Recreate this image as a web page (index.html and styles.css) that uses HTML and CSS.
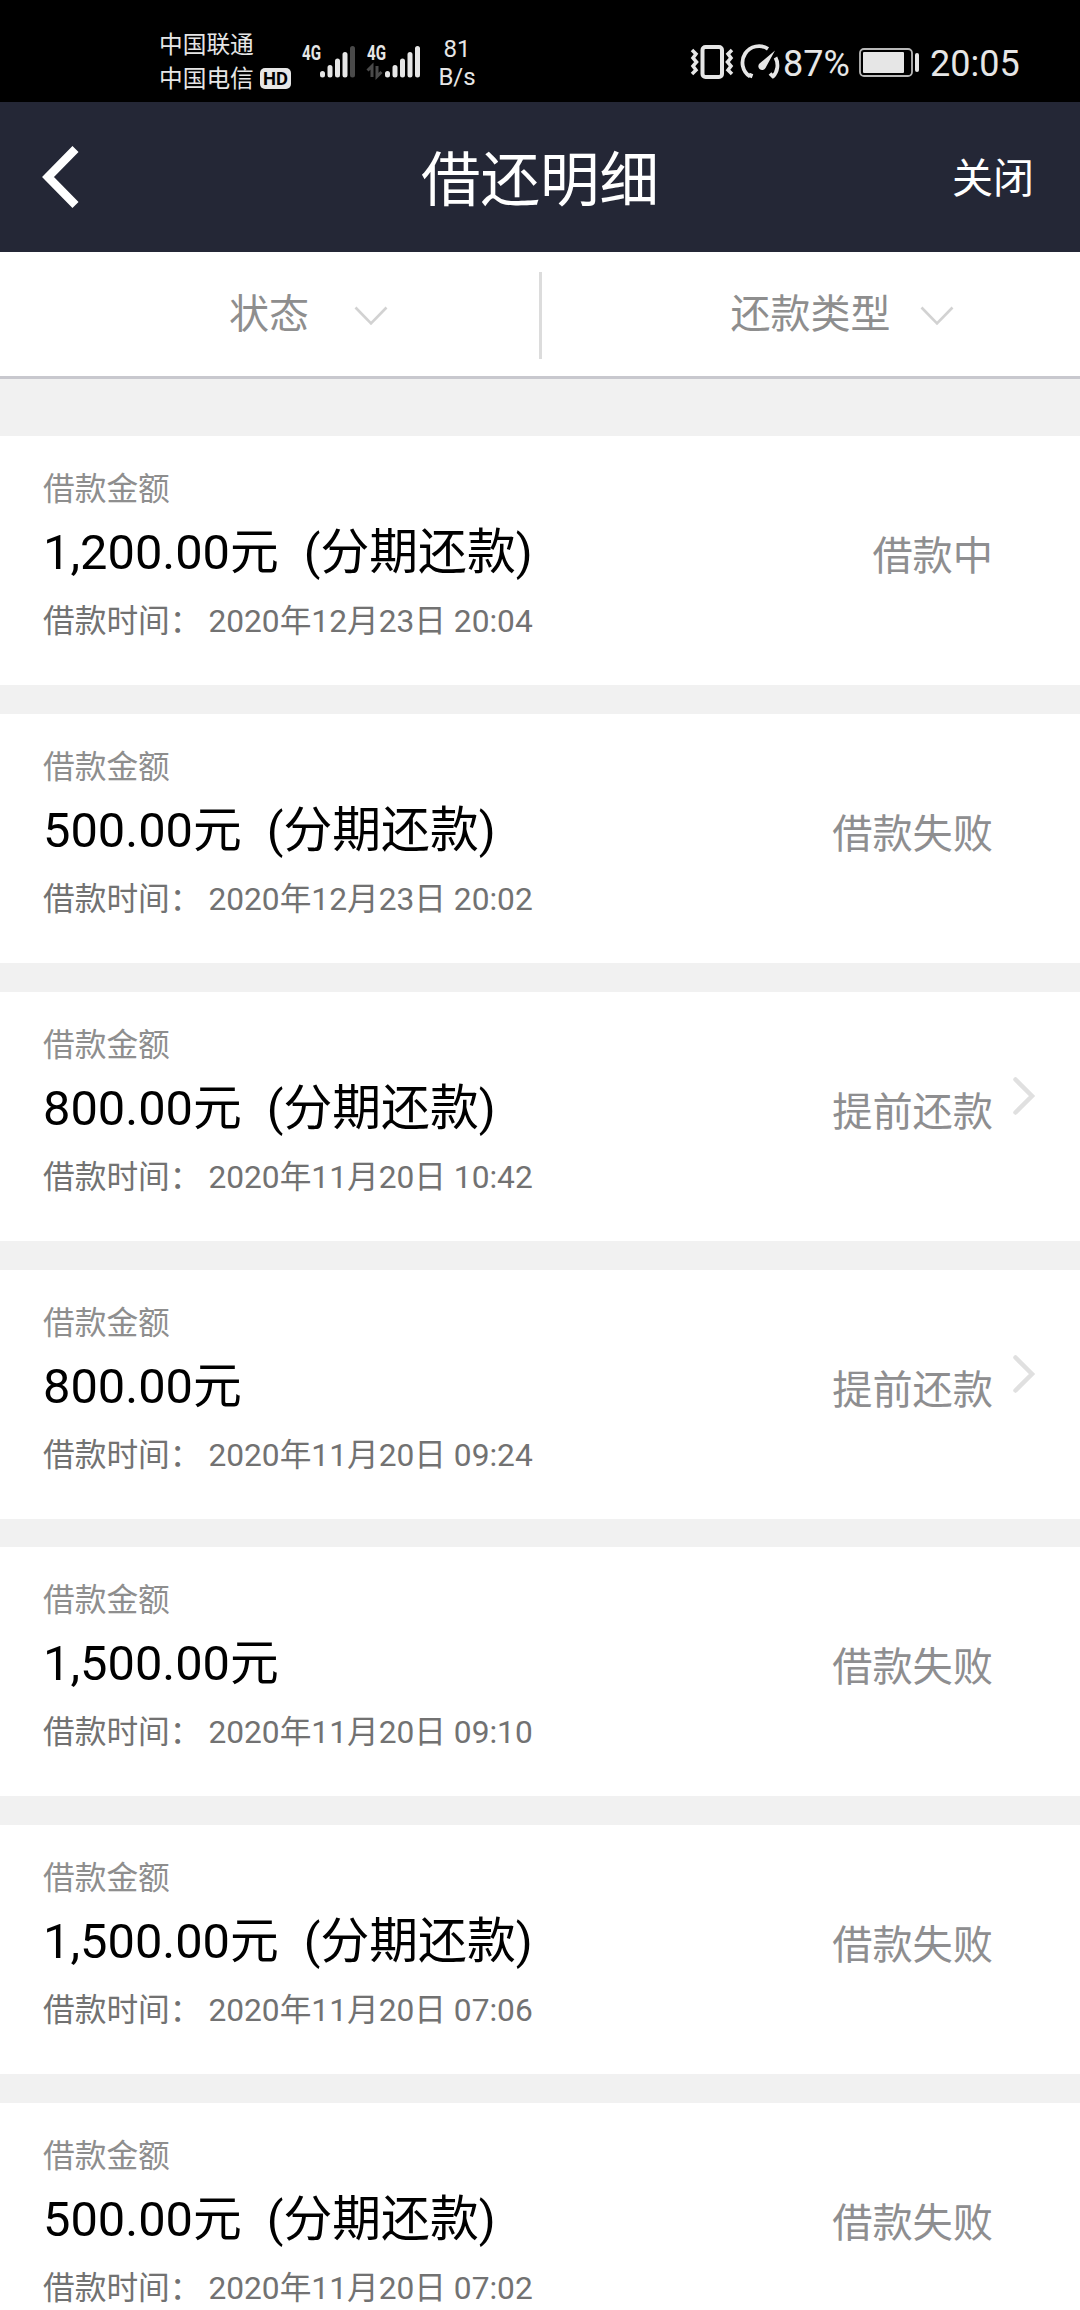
FILE: index.html
```html
<!DOCTYPE html>
<html lang="zh-CN">
<head>
  <meta charset="UTF-8">
  <meta name="viewport" content="width=device-width, initial-scale=1.0">
  <title>借还明细</title>
  <link rel="stylesheet" href="styles.css">
</head>
<body>

  <!-- Status bar -->
  <div class="status-bar">
    <div class="carriers">
      <div>中国联通</div>
      <div class="carrier-row">中国电信<span class="hd"><svg width="31" height="21" viewBox="0 0 31 21"><rect width="31" height="21" rx="5" fill="#e6e6e6"/><text x="3" y="17" textLength="25" lengthAdjust="spacingAndGlyphs" class="hd-text">HD</text></svg></span></div>
    </div>
    <svg class="signal" width="54" height="44" viewBox="0 -8 54 44">
      <text x="0" y="16" textLength="19" lengthAdjust="spacingAndGlyphs" class="net-text">4G</text>
      <g stroke="#e6e6e6" stroke-width="5" stroke-linecap="round">
        <path d="M20.500 31v-1.500M28 31v-7.500M35.500 31V17M43 31V10.500"/>
        <path d="M50.500 31V4.500" stroke="#4a4a4a"/>
      </g>
    </svg>
    <svg class="signal second" width="54" height="44" viewBox="0 -8 54 44">
      <text x="0" y="16" textLength="19" lengthAdjust="spacingAndGlyphs" class="net-text">4G</text>
      <path d="M0.500 26.500L5 22V33M10 22V32.500L14.500 28" fill="none" stroke="#4a4a4a" stroke-width="3"/>
      <g stroke="#e6e6e6" stroke-width="5" stroke-linecap="round">
        <path d="M20.500 31v-1.500M28 31v-7.500M35.500 31V17M43 31V10.500M50.500 31V4.500"/>
      </g>
    </svg>
    <div class="speed">
      <div>81</div>
      <div>B/s</div>
    </div>
    <svg class="vibrate" width="42" height="34" viewBox="0 0 42 34" fill="none" stroke="#e6e6e6">
      <rect x="11.500" y="2" width="19.500" height="30" rx="3" stroke-width="4"/>
      <path d="M1 5l4 4-3 4 3.500 4-3.500 4 3 4-4 4M41 5l-4 4 3 4-3.500 4 3.500 4-3 4 4 4" stroke-width="3.500"/>
    </svg>
    <svg class="gauge" width="38" height="34" viewBox="0 0 38 34">
      <path d="M8 32.500L9.500 28.500M8 31.500A16.500 16.500 0 0 1 26 3.800M33.500 12.500A16.500 16.500 0 0 1 31 31.500L28 28.500" fill="none" stroke="#e6e6e6" stroke-width="3.800" stroke-linejoin="round"/>
      <path d="M33 5.500L23.500 23a3.800 3.800 0 1 1-6-4.500z" fill="#e6e6e6"/>
    </svg>
    <div class="percent">87%</div>
    <svg class="battery" width="60" height="29" viewBox="0 0 60 29">
      <rect x="1" y="1" width="52" height="27" rx="4" fill="none" stroke="#b8b8b8" stroke-width="1.800"/>
      <rect x="4" y="4" width="41" height="21" rx="1" fill="#e6e6e6"/>
      <rect x="56" y="5" width="4" height="19" rx="2" fill="#e6e6e6"/>
    </svg>
    <div class="clock">20:05</div>
  </div>

  <!-- Header -->
  <header class="header">
    <svg class="back" width="38" height="64" viewBox="0 0 38 64">
      <path d="M33.500 4L6 32l27.500 28" fill="none" stroke="#fff" stroke-width="8.500"/>
    </svg>
    <h1>借还明细</h1>
    <div class="close">关闭</div>
  </header>

  <!-- Filters -->
  <div class="filters">
    <div class="filter">
      <span>状态</span>
      <svg width="34" height="20" viewBox="0 0 34 20"><path d="M1.500 1.500L17 17.500l15.500-16" fill="none" stroke="#d2d2d2" stroke-width="2.600"/></svg>
    </div>
    <div class="divider"></div>
    <div class="filter type">
      <span>还款类型</span>
      <svg width="34" height="20" viewBox="0 0 34 20"><path d="M1.500 1.500L17 17.500l15.500-16" fill="none" stroke="#d2d2d2" stroke-width="2.600"/></svg>
    </div>
  </div>

  <!-- Loan list -->
  <div class="list">
    <div class="card">
      <div class="info">
        <div class="label">借款金额</div>
        <div class="amount">1,200.00元<span class="plan">(分期还款)</span></div>
        <div class="time">借款时间：<span>2020年12月23日 20:04</span></div>
      </div>
      <div class="state">借款中</div>
    </div>
    <div class="card">
      <div class="info">
        <div class="label">借款金额</div>
        <div class="amount">500.00元<span class="plan">(分期还款)</span></div>
        <div class="time">借款时间：<span>2020年12月23日 20:02</span></div>
      </div>
      <div class="state">借款失败</div>
    </div>
    <div class="card">
      <div class="info">
        <div class="label">借款金额</div>
        <div class="amount">800.00元<span class="plan">(分期还款)</span></div>
        <div class="time">借款时间：<span>2020年11月20日 10:42</span></div>
      </div>
      <div class="state">提前还款</div>
      <svg class="arrow" width="24" height="40" viewBox="0 0 24 40"><path d="M3.500 3.500L20 20 3.500 36.500" fill="none" stroke="#e0e0e0" stroke-width="4.500" stroke-linecap="round"/></svg>
    </div>
    <div class="card">
      <div class="info">
        <div class="label">借款金额</div>
        <div class="amount">800.00元</div>
        <div class="time">借款时间：<span>2020年11月20日 09:24</span></div>
      </div>
      <div class="state">提前还款</div>
      <svg class="arrow" width="24" height="40" viewBox="0 0 24 40"><path d="M3.500 3.500L20 20 3.500 36.500" fill="none" stroke="#e0e0e0" stroke-width="4.500" stroke-linecap="round"/></svg>
    </div>
    <div class="card">
      <div class="info">
        <div class="label">借款金额</div>
        <div class="amount">1,500.00元</div>
        <div class="time">借款时间：<span>2020年11月20日 09:10</span></div>
      </div>
      <div class="state">借款失败</div>
    </div>
    <div class="card">
      <div class="info">
        <div class="label">借款金额</div>
        <div class="amount">1,500.00元<span class="plan">(分期还款)</span></div>
        <div class="time">借款时间：<span>2020年11月20日 07:06</span></div>
      </div>
      <div class="state">借款失败</div>
    </div>
    <div class="card">
      <div class="info">
        <div class="label">借款金额</div>
        <div class="amount">500.00元<span class="plan">(分期还款)</span></div>
        <div class="time">借款时间：<span>2020年11月20日 07:02</span></div>
      </div>
      <div class="state">借款失败</div>
    </div>
  </div>

</body>
</html>
```
FILE: styles.css
```css
* {
  box-sizing: border-box;
}

body {
  margin: 0;
  width: 1080px;
  height: 2310px;
  overflow: hidden;
  background-color: #f1f1f1;
  font-family: Roboto, "Noto Sans CJK SC", sans-serif;
}

svg {
  display: block;
  flex: none;
  overflow: visible;
}

/* Status bar */
.status-bar {
  display: flex;
  height: 102px;
  background-color: #000;
  color: #e6e6e6;
  padding-left: 159px;
  white-space: nowrap;
}

.carriers {
  width: 143px;
  padding-top: 28px;
  font-size: 23.7px;
  line-height: 34px;
}

.carrier-row {
  display: flex;
}

.hd {
  margin: 6px 0 0 6px;
}

.hd-text {
  font-size: 19px;
  font-weight: 700;
  fill: #000;
}

.net-text {
  font-size: 21px;
  font-weight: 700;
  fill: #e6e6e6;
}

.signal {
  margin-top: 36px;
}

.signal.second {
  margin-left: 11px;
}

.speed {
  width: 50px;
  margin-left: 11px;
  padding-top: 35px;
  text-align: center;
  font-size: 24px;
  line-height: 28px;
}

.vibrate {
  margin: 45px 0 0 209px;
}

.gauge {
  margin: 45px 0 0 9px;
}

.percent {
  width: 76px;
  margin-left: 3px;
  padding-top: 43px;
  font-size: 36px;
  line-height: 42px;
}

.battery {
  margin-top: 48px;
}

.clock {
  margin-left: 11px;
  padding-top: 43px;
  font-size: 36px;
  line-height: 42px;
}

/* Header */
.header {
  display: flex;
  align-items: center;
  justify-content: space-between;
  height: 150px;
  padding: 0 46px 0 42px;
  background-color: #242736;
  color: #fff;
}

.header h1 {
  margin: 7px 0 0 48px;
  font-size: 59.5px;
  font-weight: 400;
  line-height: 80px;
}

.close {
  margin-top: 4px;
  font-size: 41px;
  line-height: 60px;
}

/* Filters */
.filters {
  display: flex;
  height: 127px;
  background-color: #fff;
  border-bottom: 3px solid #c8c8ce;
  color: #8e8e8e;
  font-size: 40px;
  line-height: 60px;
}

.filter {
  display: flex;
  align-items: center;
  width: 539px;
  padding-left: 229px;
}

.filter span {
  margin-top: 1px;
}

.filter svg {
  margin: 4px 0 0 45px;
}

.filter.type {
  padding-left: 189px;
}

.filter.type svg {
  margin-left: 29px;
}

.divider {
  width: 3px;
  height: 87px;
  margin-top: 20px;
  background-color: #dcdcdc;
}

/* Loan list */
.list {
  display: flex;
  flex-direction: column;
  gap: 28.85px;
  padding-top: 57px;
}

.card {
  display: flex;
  flex: none;
  height: 249px;
  padding: 31px 44px 0 43px;
  background-color: #fff;
  white-space: nowrap;
}

.info {
  width: 600px;
}

.label {
  font-size: 31.7px;
  line-height: 46px;
  color: #8e8e8e;
}

.amount {
  margin-top: 6px;
  font-size: 48.8px;
  line-height: 68px;
  color: #000;
}

.plan {
  margin-left: 25px;
}

.time {
  margin-top: 12px;
  font-size: 31.7px;
  line-height: 46px;
  color: #727272;
}

.time span {
  margin-left: 7px;
}

.state {
  width: 350px;
  padding-top: 60px;
  text-align: right;
  font-size: 40.2px;
  line-height: 60px;
  color: #8e8e90;
}

.arrow {
  margin: 53px 0 0 19px;
}
```
